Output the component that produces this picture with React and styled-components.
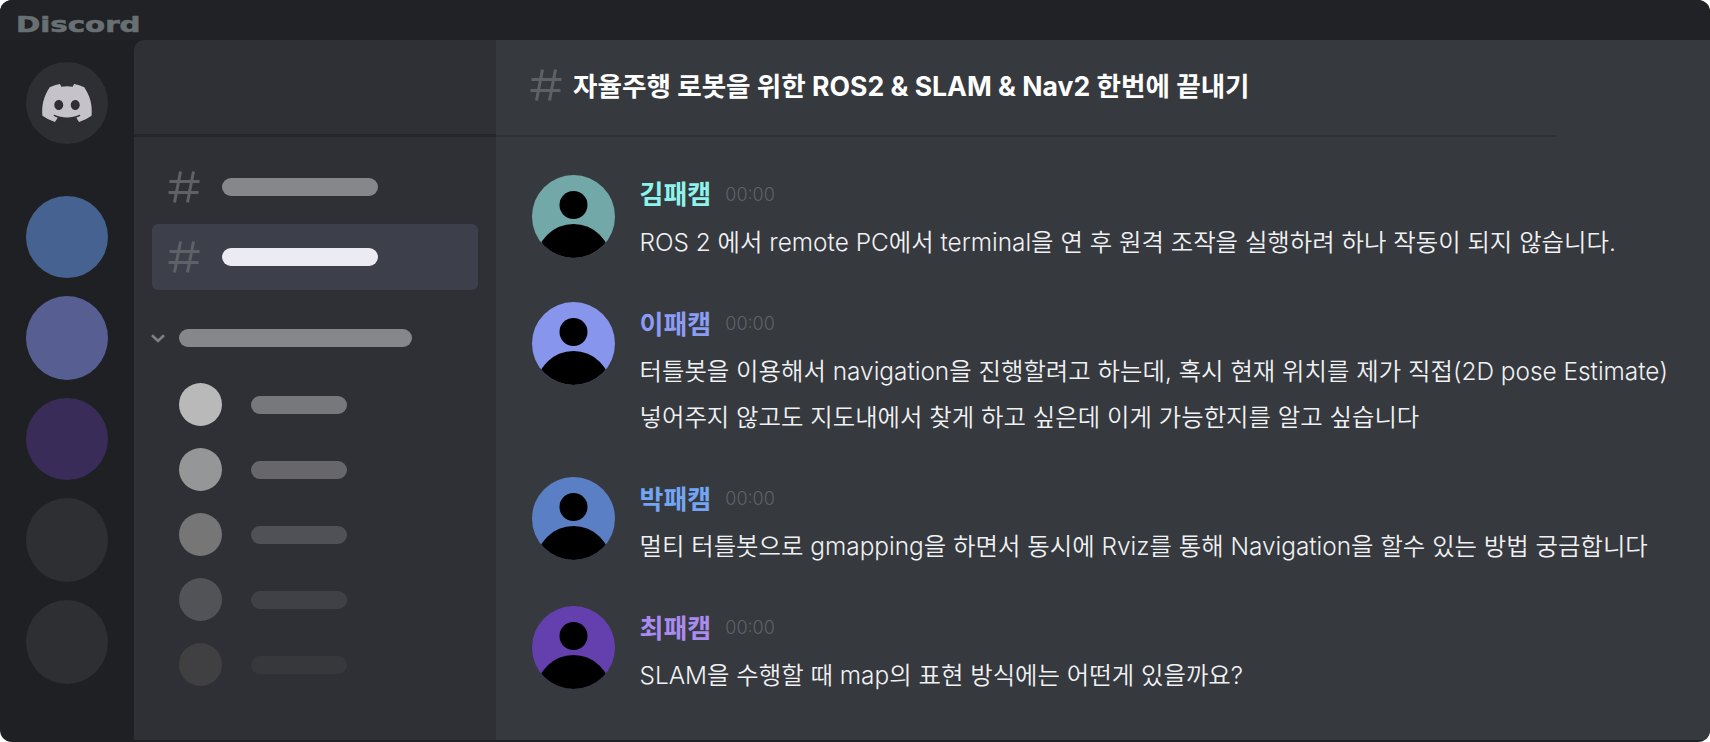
import styled, { createGlobalStyle } from "styled-components";
import { FaDiscord } from "react-icons/fa";

const GlobalStyle = createGlobalStyle`
    html, body {
        margin: 0;
        padding: 0;
        background: #fff;
    }
    * {
        box-sizing: border-box;
    }
`;

const servers = [
    { color: "#456291", height: 82 },
    { color: "#575f92", height: 84 },
    { color: "#392c59", height: 82 },
    { color: "#2e2f33", height: 84 },
    { color: "#2e2f33", height: 84 },
];

const members = [
    { dot: "#b9b9b9", bar: "#77787c" },
    { dot: "#959697", bar: "#66666b" },
    { dot: "#767677", bar: "#505156" },
    { dot: "#525356", bar: "#404146" },
    { dot: "#404043", bar: "#37383c" },
];

const messages = [
    {
        name: "김패캠",
        color: "#8ff3ec",
        avatar: "#72a9a8",
        headHeight: 38,
        headGap: 5.5,
        lines: ["ROS 2 에서 remote PC에서 terminal을 연 후 원격 조작을 실행하려 하나 작동이 되지 않습니다."],
    },
    {
        name: "이패캠",
        color: "#8b9cf4",
        avatar: "#8795ec",
        headHeight: 43,
        headGap: 2.5,
        lines: [
            "터틀봇을 이용해서 navigation을 진행할려고 하는데, 혹시 현재 위치를 제가 직접(2D pose Estimate)",
            "넣어주지 않고도 지도내에서 찾게 하고 싶은데 이게 가능한지를 알고 싶습니다",
        ],
    },
    {
        name: "박패캠",
        color: "#74a5f5",
        avatar: "#5a7fc5",
        headHeight: 43,
        headGap: 2.5,
        lines: ["멀티 터틀봇으로 gmapping을 하면서 동시에 Rviz를 통해 Navigation을 할수 있는 방법 궁금합니다"],
    },
    {
        name: "최패캠",
        color: "#a98bf0",
        avatar: "#6340ad",
        headHeight: 43,
        headGap: 2.5,
        lines: ["SLAM을 수행할 때 map의 표현 방식에는 어떤게 있을까요?"],
    },
];

function Hash({ color = "#5e6166" }) {
    return (
        <HashIcon viewBox="0 0 32 32" fill="none" stroke={color} strokeWidth="3">
            <path d="M12.5 0.5 L6.5 31.5" />
            <path d="M25.5 0.5 L19.5 31.5" />
            <path d="M1.5 10.5 H31.5" />
            <path d="M0.5 21.5 H30.5" />
        </HashIcon>
    );
}

function Avatar({ color }) {
    return (
        <AvatarCircle $color={color}>
            <svg viewBox="0 0 83 83" width="83" height="83">
                <circle cx="41.5" cy="30" r="14" fill="#000" />
                <circle cx="41.5" cy="86.4" r="37.4" fill="#000" />
            </svg>
        </AvatarCircle>
    );
}

export default function App() {
    return (
        <>
            <GlobalStyle />
            <Window>
                <TitleBar>
                    <Wordmark>Discord</Wordmark>
                </TitleBar>
                <Body>
                    <Rail>
                        <LogoButton>
                            <FaDiscord size={54} />
                        </LogoButton>
                        <ServerList>
                            {servers.map((s, i) => (
                                <Server key={i} $color={s.color} $height={s.height} />
                            ))}
                        </ServerList>
                    </Rail>
                    <Sidebar>
                        <SidebarHeader />
                        <Channels>
                            <Channel>
                                <Hash />
                                <Bar $width={156} $color="#86878b" />
                            </Channel>
                            <Channel $active>
                                <Hash />
                                <Bar $width={156} $color="#ecebf1" />
                            </Channel>
                        </Channels>
                        <Section>
                            <svg width="14" height="9" viewBox="0 0 14 9" fill="none" stroke="#7e7f84" strokeWidth="2.6">
                                <path d="M1 1.2 L7 7 L13 1.2" />
                            </svg>
                            <Bar $width={233} $color="#86878b" />
                        </Section>
                        <Members>
                            {members.map((m, i) => (
                                <Member key={i}>
                                    <Dot $color={m.dot} />
                                    <Bar $width={96} $color={m.bar} />
                                </Member>
                            ))}
                        </Members>
                    </Sidebar>
                    <Main>
                        <MainHeader>
                            <Hash />
                            <Title>자율주행 로봇을 위한 ROS2 & SLAM & Nav2 한번에 끝내기</Title>
                        </MainHeader>
                        <MessageList>
                            {messages.map((m) => (
                                <Message key={m.name}>
                                    <Avatar color={m.avatar} />
                                    <MessageBody>
                                        <MessageHead $height={m.headHeight} $gap={m.headGap}>
                                            <Name $color={m.color}>{m.name}</Name>
                                            <Time>00:00</Time>
                                        </MessageHead>
                                        {m.lines.map((line) => (
                                            <Line key={line}>{line}</Line>
                                        ))}
                                    </MessageBody>
                                </Message>
                            ))}
                        </MessageList>
                    </Main>
                </Body>
            </Window>
        </>
    );
}

const Window = styled.div`
    width: 1710px;
    height: 742px;
    display: flex;
    flex-direction: column;
    background: #1f2024;
    border-radius: 12px;
    overflow: hidden;
    font-family: Inter, "Noto Sans CJK KR", sans-serif;
`;

const TitleBar = styled.div`
    height: 40px;
    flex: none;
    padding: 12px 0 0 16px;
    background: #212226;
`;

const Wordmark = styled.div`
    font-family: "DejaVu Sans", sans-serif;
    font-weight: 700;
    font-size: 22px;
    line-height: 26px;
    color: #687074;
    -webkit-text-stroke: 0.6px #687074;
    transform-origin: left center;
    transform: scaleX(1.33);
`;

const Body = styled.div`
    height: 702px;
    flex: none;
    display: flex;
`;

const Rail = styled.div`
    width: 134px;
    flex: none;
    padding: 22px 0 0 26px;
`;

const LogoButton = styled.div`
    width: 82px;
    height: 82px;
    border-radius: 50%;
    background: #2e2f33;
    color: #c5c3c9;
    display: flex;
    align-items: center;
    justify-content: center;
`;

const ServerList = styled.div`
    margin-top: 52px;
    display: flex;
    flex-direction: column;
    gap: 18px;
`;

const Server = styled.div`
    width: 82px;
    height: ${(p) => p.$height}px;
    border-radius: 50%;
    background: ${(p) => p.$color};
`;

const Sidebar = styled.div`
    width: 362px;
    flex: none;
    background: #2f3035;
    border-top-left-radius: 10px;
    margin-bottom: 2px;
`;

const SidebarHeader = styled.div`
    height: 97px;
    border-bottom: 3px solid #25262a;
`;

const Channels = styled.div`
    padding: 17px 18px 0;
    display: flex;
    flex-direction: column;
    gap: 4px;
`;

const Channel = styled.div`
    height: 66px;
    display: flex;
    align-items: center;
    gap: 22px;
    padding-left: 16px;
    border-radius: 6px;
    background: ${(p) => (p.$active ? "#3d3f4a" : "transparent")};
`;

const HashIcon = styled.svg`
    width: 32px;
    height: 32px;
    flex: none;
`;

const Bar = styled.div`
    width: ${(p) => p.$width}px;
    height: 18px;
    border-radius: 9px;
    background: ${(p) => p.$color};
`;

const Section = styled.div`
    margin-top: 39px;
    padding-left: 17px;
    display: flex;
    align-items: center;
    gap: 14px;
`;

const Members = styled.div`
    margin-top: 36px;
    padding-left: 45px;
    display: flex;
    flex-direction: column;
    gap: 22px;
`;

const Member = styled.div`
    display: flex;
    align-items: center;
    gap: 29px;
`;

const Dot = styled.div`
    width: 43px;
    height: 43px;
    border-radius: 50%;
    background: ${(p) => p.$color};
`;

const Main = styled.div`
    flex: 1;
    min-width: 0;
    background: #36393e;
    margin-bottom: 2px;
`;

const MainHeader = styled.div`
    width: 1060px;
    height: 97px;
    padding: 0 0 6px 34px;
    display: flex;
    align-items: center;
    gap: 11px;
    border-bottom: 2px solid #2f3034;
`;

const Title = styled.h1`
    margin: 0;
    font-size: 26.6px;
    font-weight: 700;
    color: #fff;
`;

const MessageList = styled.div`
    padding: 38px 0 0 36px;
    display: flex;
    flex-direction: column;
    gap: 37.5px;
`;

const Message = styled.div`
    display: flex;
    align-items: flex-start;
    gap: 24.5px;
`;

const AvatarCircle = styled.div`
    width: 83px;
    height: 83px;
    flex: none;
    border-radius: 50%;
    overflow: hidden;
    background: ${(p) => p.$color};
    svg {
        display: block;
    }
`;

const MessageBody = styled.div`
    min-width: 0;
`;

const MessageHead = styled.div`
    height: ${(p) => p.$height}px;
    margin-bottom: ${(p) => p.$gap}px;
    display: flex;
    align-items: center;
    gap: 14px;
`;

const Name = styled.span`
    padding-bottom: 3px;
    font-size: 26px;
    font-weight: 700;
    color: ${(p) => p.$color};
`;

const Time = styled.span`
    font-size: 18px;
    font-weight: 300;
    color: #5f6267;
`;

const Line = styled.div`
    font-size: 24.4px;
    line-height: 46px;
    font-weight: 350;
    color: #f0f1f3;
    white-space: nowrap;
`;
